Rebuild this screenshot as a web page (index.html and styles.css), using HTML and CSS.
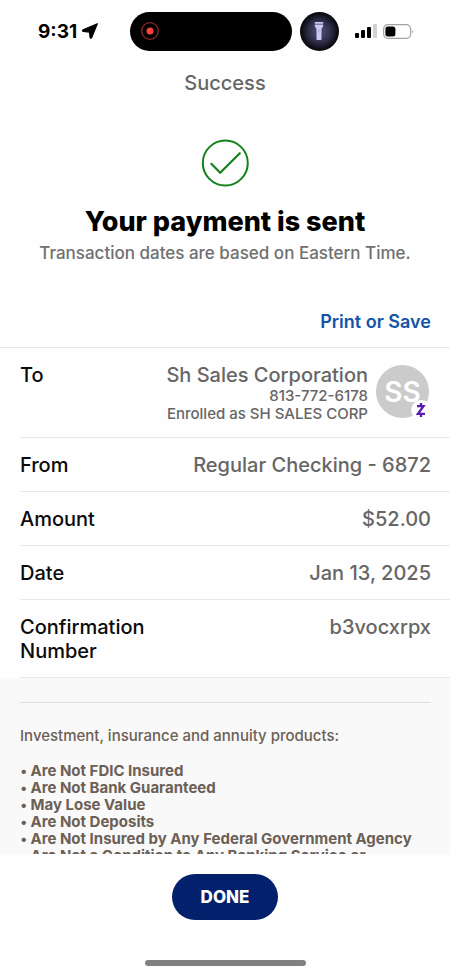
FILE: index.html
```html
<!DOCTYPE html>
<html lang="en">
<head>
<meta charset="utf-8">
<meta name="viewport" content="width=device-width, initial-scale=1">
<title>Success</title>
<link rel="stylesheet" href="styles.css">
</head>
<body>
<div class="status">
  <div class="clock">
    <span>9:31</span>
    <svg width="16" height="16" viewBox="0 0 16 16"><path d="M15.300.7 9.700 14.600c-.3.8-1.500.8-1.600-.1L7.500 9.100 1.300 8.300C.4 8.200.4 7.100 1.200 6.700Z" fill="#000" stroke="#000" stroke-width="1.200" stroke-linejoin="round"/></svg>
  </div>
  <div class="island">
    <svg width="20" height="20" viewBox="0 0 20 20"><circle cx="10" cy="10" r="8.300" fill="none" stroke="#8a2a2a" stroke-width="1.300"/><circle cx="10" cy="10" r="3.500" fill="#ff4038"/></svg>
  </div>
  <div class="torch">
    <svg width="10" height="20" viewBox="0 0 10 20"><path d="M.8 1h8.400v1.800H.8zM.8 3.600h8.400v1.600L7.500 8v10.200q0 .8-.8.8H3.300q-.8 0-.8-.8V8L.8 5.200z" fill="#ccc8f4"/><rect x="4.400" y="8.500" width="1.200" height="3" rx=".6" fill="#aaa6da"/></svg>
  </div>
  <div class="signals">
    <svg width="22" height="14" viewBox="0 0 22 14"><rect y="9" width="4" height="5" rx="1"/><rect x="6" y="6" width="4" height="8" rx="1"/><rect x="12" y="3" width="4" height="11" rx="1"/><rect x="18" width="4" height="14" rx="1" fill="#d2d2d2"/></svg>
    <svg width="31" height="15" viewBox="0 0 31 15"><rect x=".6" y=".6" width="27" height="13.800" rx="4.300" fill="none" stroke="#a2a2a2" stroke-width="1.200"/><rect x="2.400" y="2.500" width="10" height="10" rx="2.500"/><path d="M29.200 5.500q1.500 2 0 4z" fill="#999"/></svg>
  </div>
</div>
<main class="content">
  <h1 class="screen-title">Success</h1>
  <section class="result">
    <svg width="48" height="48" viewBox="0 0 48 48" fill="none" stroke="#14801b" stroke-width="2"><circle cx="24.300" cy="24" r="22.500"/><path d="m10.300 24.800 8.900 8.900L38.800 14.200" stroke-width="2.200" stroke-linecap="round"/></svg>
    <h2>Your payment is sent</h2>
    <p>Transaction dates are based on Eastern Time.</p>
  </section>
  <div class="actions"><a href="#print">Print or Save</a></div>
  <dl class="details">
    <div class="row">
      <dt>To</dt>
      <dd class="payee">
        <div>
          <div>Sh Sales Corporation</div>
          <div class="note">813-772-6178</div>
          <div class="note">Enrolled as SH SALES CORP</div>
        </div>
        <div class="avatar">SS
          <span class="badge"><svg width="10" height="16" viewBox="0 0 10 16" fill="none" stroke="#5a1ab4" stroke-width="2.300"><path d="M1 4.200h6.500L2 11.800h7M5 1v3M5 12v3"/></svg></span>
        </div>
      </dd>
    </div>
    <div class="row"><dt>From</dt><dd>Regular Checking - 6872</dd></div>
    <div class="row"><dt>Amount</dt><dd>$52.00</dd></div>
    <div class="row"><dt>Date</dt><dd>Jan 13, 2025</dd></div>
    <div class="row"><dt>Confirmation Number</dt><dd>b3vocxrpx</dd></div>
  </dl>
  <section class="legal">
    <p>Investment, insurance and annuity products:</p>
    <ul>
      <li>Are Not FDIC Insured</li>
      <li>Are Not Bank Guaranteed</li>
      <li>May Lose Value</li>
      <li>Are Not Deposits</li>
      <li>Are Not Insured by Any Federal Government Agency</li>
      <li>Are Not a Condition to Any Banking Service or</li>
    </ul>
  </section>
</main>
<footer class="footer">
  <button type="button">DONE</button>
  <div class="home"></div>
</footer>
</body>
</html>
```
FILE: styles.css
```css
* { box-sizing: border-box; margin: 0; padding: 0; }
body {
  height: 100vh;
  display: flex;
  flex-direction: column;
  background: #fefefe;
  color: #0b0b0b;
  font-family: Inter, "Liberation Sans", sans-serif;
  font-weight: 500;
}
svg { display: block; flex: none; }
.status {
  flex: none;
  display: flex;
  align-items: center;
  height: 62px;
  padding: 0 36px 0 38px;
}
.clock {
  flex: 1 1 16px;
  display: flex;
  align-items: center;
  gap: 5px;
  font-size: 19px;
  font-weight: 700;
  color: #000;
}
.island {
  display: flex;
  align-items: center;
  width: 162px;
  height: 39px;
  padding-left: 10px;
  border-radius: 20px;
  background: #000;
}
.torch {
  display: flex;
  align-items: center;
  justify-content: center;
  width: 39px;
  height: 39px;
  margin-left: 8px;
  border-radius: 50%;
  background: radial-gradient(circle, #56527c 0, #302e48 40%, #08080e 68%);
}
.signals {
  flex: 1 1 0;
  display: flex;
  align-items: center;
  justify-content: flex-end;
  gap: 6px;
}
.content { flex: 1; min-height: 0; overflow: hidden; }
.screen-title {
  font-size: 20px;
  line-height: 24px;
  font-weight: 500;
  padding-top: 9px;
  text-align: center;
  color: #666;
}
.result {
  display: flex;
  flex-direction: column;
  align-items: center;
  padding-top: 44px;
  text-align: center;
}
.result h2 {
  margin-top: 17px;
  font-size: 27px;
  line-height: 36px;
  font-weight: 800;
  color: #000;
}
.result p { font-size: 17px; line-height: 26px; color: #707070; }
.actions {
  padding: 44px 19px 13px;
  text-align: right;
  font-size: 18px;
  line-height: 24px;
}
.actions a { color: #1353a8; font-weight: 600; text-decoration: none; }
.details {
  border-top: 1px solid #e8e8e8;
  font-size: 20px;
  line-height: 24px;
}
.row {
  display: flex;
  justify-content: space-between;
  gap: 16px;
  margin-left: 20px;
  padding: 15px 19px 14px 0;
  border-bottom: 1px solid #e8e8e8;
}
.row dt { flex: 0 1 140px; }
.row dd { flex: 1 0 auto; color: #666; text-align: right; }
.row .payee { display: flex; justify-content: flex-end; gap: 8px; padding-right: 2px; }
.note { font-size: 15px; line-height: 18px; }
.avatar {
  position: relative;
  display: flex;
  align-items: center;
  justify-content: center;
  width: 53px;
  height: 53px;
  margin-top: 2px;
  border-radius: 50%;
  background: #cbcbcb;
  color: #fff;
  font-size: 28px;
  font-weight: 600;
}
.badge {
  position: absolute;
  right: -2px;
  bottom: -2px;
  display: flex;
  align-items: center;
  justify-content: center;
  width: 20px;
  height: 20px;
  border-radius: 50%;
  background: #fefefe;
}
.legal {
  padding: 24px 19px 0 20px;
  background: #f9f9f9;
  color: #6b6055;
  font-size: 15px;
}
.legal p {
  padding: 24px 0 17px;
  border-top: 1px solid #dedede;
  line-height: 18px;
}
.legal ul { list-style: none; font-weight: 700; line-height: 17px; }
.legal li { display: flex; gap: 3px; white-space: nowrap; }
.legal li::before { content: "•"; font-size: 14px; font-weight: 500; }
.footer {
  flex: none;
  display: flex;
  flex-direction: column;
  align-items: center;
  padding: 20px 0 10px;
  background: #fefefe;
}
.footer button {
  height: 46px;
  padding: 0 29px;
  border: 0;
  border-radius: 23px;
  background: #02206b;
  color: #fff;
  font: 800 17px/24px Inter, "Liberation Sans", sans-serif;
}
.home {
  width: 161px;
  height: 6px;
  margin-top: 40px;
  border-radius: 3px;
  background: #808080;
}
```
